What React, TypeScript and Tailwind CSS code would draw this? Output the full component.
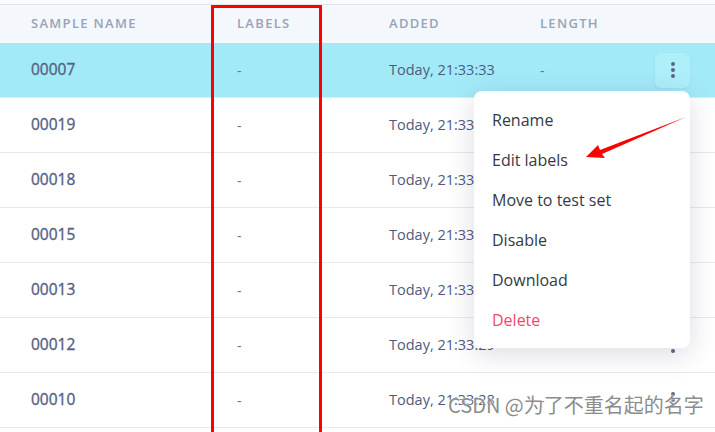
const ROWS = [
  { name: "00007", added: "Today, 21:33:33", active: true },
  { name: "00019", added: "Today, 21:33:33" },
  { name: "00018", added: "Today, 21:33:32" },
  { name: "00015", added: "Today, 21:33:31" },
  { name: "00013", added: "Today, 21:33:30" },
  { name: "00012", added: "Today, 21:33:29" },
  { name: "00010", added: "Today, 21:33:28" },
  { name: "00009", added: "Today, 21:33:27" },
];

const MENU = ["Rename", "Edit labels", "Move to test set", "Disable", "Download"];

function Dots() {
  return (
    <div className="flex flex-col items-center gap-[2px]">
      <span className="h-[4px] w-[4px] rounded-full bg-[#5d6688]" />
      <span className="h-[4px] w-[4px] rounded-full bg-[#5d6688]" />
      <span className="h-[4px] w-[4px] rounded-full bg-[#5d6688]" />
    </div>
  );
}

export default function App() {
  return (
    <div
      className="relative h-[432px] w-[715px] overflow-hidden bg-white"
      style={{ fontFamily: '"Open Sans", "Noto Sans", sans-serif' }}
    >
      <div className="h-[4px] bg-[#f9fafb]" />
      <div className="border-t border-[#e3e7ec]">
        <div className="flex h-[38px] items-center bg-[#f4f7fb] text-[13px] font-semibold uppercase tracking-[0.1em] text-[#98a3b6]">
          <div className="w-[237px] pl-[31px]">Sample name</div>
          <div className="w-[152px]">Labels</div>
          <div className="w-[151px]">Added</div>
          <div className="flex-1">Length</div>
        </div>

        {ROWS.map((row) => (
          <div
            key={row.name}
            className={`flex h-[55px] items-center border-b border-[#e8e9ee] ${row.active ? "bg-[#a3eaf8]" : "bg-white"}`}
          >
            <div className="w-[237px] pl-[31px] text-[15.5px] text-[#556083] [-webkit-text-stroke:0.35px_#556083]">
              {row.name}
            </div>
            <div className="w-[152px] text-[14px] text-[#6b7390]">-</div>
            <div className="w-[151px] text-[14.5px] text-[#4f5a7e]">{row.added}</div>
            <div className="flex-1 text-[14px] text-[#6b7390]">-</div>
            <div
              className={`mr-[25px] flex h-[35px] w-[35px] items-center justify-center rounded-md ${row.active ? "bg-[#aeeffa] shadow-[0_1px_3px_rgba(0,80,100,0.08)]" : ""}`}
            >
              <Dots />
            </div>
          </div>
        ))}
      </div>

      {/* context menu */}
      <div className="absolute left-[474px] top-[91px] w-[216px] rounded-lg bg-white pb-[8px] pt-[9px] shadow-[0_6px_28px_rgba(40,40,80,0.16)]">
        {MENU.map((item) => (
          <div key={item} className="flex h-[40px] items-center pl-[18px] text-[16px] text-[#343a44]">
            {item}
          </div>
        ))}
        <div className="flex h-[40px] items-center pl-[18px] text-[16px] text-[#f2466e]">Delete</div>
      </div>

      {/* annotation: red box */}
      <div className="absolute left-[211px] top-[5px] h-[440px] w-[111px] border-[3px] border-[#ff0000]" />

      {/* annotation: arrow */}
      <svg className="absolute left-0 top-0" width="715" height="432" viewBox="0 0 715 432">
        <polygon points="586,157 598,145 600,150 686,117 602,154 605,158" fill="#ff0000" />
      </svg>

      {/* watermark */}
      <div
        className="absolute left-[448px] top-[390px] text-[20px] text-[#8c8c8c]"
        style={{ fontFamily: '"Noto Sans CJK SC", sans-serif', textShadow: "0 0 2px #fff, 0 0 2px #fff" }}
      >
        CSDN @为了不重名起的名字
      </div>
    </div>
  );
}
